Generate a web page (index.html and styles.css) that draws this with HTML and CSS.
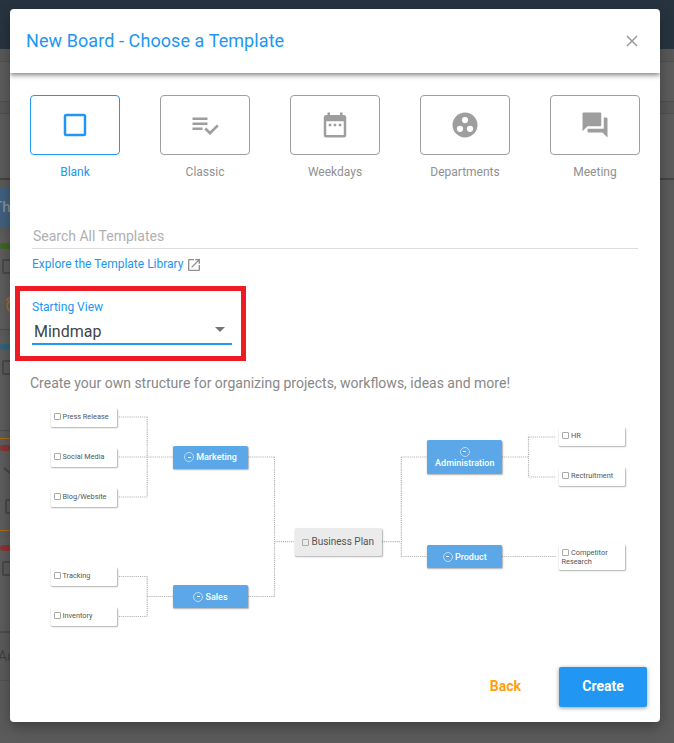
FILE: index.html
```html
<!DOCTYPE html>
<html lang="en">
<head>
<meta charset="utf-8">
<title>New Board</title>
<link rel="stylesheet" href="styles.css">
</head>
<body>
<div class="page">
  <div class="topbar"></div>
  <div class="strip strip-a"></div>
  <div class="strip strip-b"></div>
  <div class="strip strip-c"></div>
  <div class="strip strip-d"></div>
  <div class="board">
    <div class="column-head">Th</div>
    <div class="card card-one">
      <div class="label green"></div>
      <div class="check"></div>
      <svg class="clock" width="20" height="20" viewBox="0 0 24 24"><path d="M22 5.7l-4.6-3.9-1.3 1.5 4.6 3.9L22 5.7zM7.9 3.4L6.6 1.9 2 5.7l1.3 1.5 4.6-3.8zM12.500 8H11v6l4.700 2.900.8-1.200-4-2.400V8zM12 4a9 9 0 1 0 0 18 9 9 0 0 0 0-18zm0 16a7 7 0 1 1 0-14 7 7 0 0 1 0 14z"/></svg>
    </div>
    <div class="card card-two">
      <div class="label blue"></div>
      <div class="check"></div>
    </div>
    <div class="card card-three">
      <div class="label red"></div>
      <svg class="chevron" width="14" height="8" viewBox="0 0 14 8"><path d="M1 1l6 5 6-5"/></svg>
      <div class="check small"></div>
    </div>
    <div class="card card-four">
      <div class="label red"></div>
      <div class="check"></div>
    </div>
    <div class="add">Ad</div>
  </div>
</div>

<div class="modal">
  <header class="modal-head">
    <h1>New Board - Choose a Template</h1>
    <svg class="close" width="12" height="12" viewBox="0 0 12 12"><path d="M1 1l10 10M11 1L1 11"/></svg>
  </header>
  <div class="modal-body">
    <div class="templates">
      <div class="template selected">
        <div class="tile"><svg width="30" height="30" viewBox="0 0 24 24"><path d="M19 3H5a2 2 0 0 0-2 2v14a2 2 0 0 0 2 2h14a2 2 0 0 0 2-2V5a2 2 0 0 0-2-2zm0 16H5V5h14v14z"/></svg></div>
        <span>Blank</span>
      </div>
      <div class="template">
        <div class="tile"><svg width="30" height="30" viewBox="0 0 24 24"><path d="M14 10H2v2h12v-2zm0-4H2v2h12V6zM2 16h8v-2H2v2zm19.500-4.500L23 13l-6.990 7-4.510-4.500L13 14l3.010 3 5.490-5.500z"/></svg></div>
        <span>Classic</span>
      </div>
      <div class="template">
        <div class="tile"><svg width="30" height="30" viewBox="0 0 24 24"><path d="M9 11H7v2h2v-2zm4 0h-2v2h2v-2zm4 0h-2v2h2v-2zm2-7h-1V2h-2v2H8V2H6v2H5a2 2 0 0 0-2 2v14a2 2 0 0 0 2 2h14a2 2 0 0 0 2-2V6a2 2 0 0 0-2-2zm0 16H5V9h14v11z"/></svg></div>
        <span>Weekdays</span>
      </div>
      <div class="template">
        <div class="tile"><svg width="30" height="30" viewBox="0 0 24 24"><path fill-rule="evenodd" d="M12 2a10 10 0 1 0 0 20 10 10 0 0 0 0-20zM8 17.500a2.500 2.500 0 1 1 0-5 2.500 2.500 0 0 1 0 5zM9.500 8a2.500 2.500 0 1 1 5 0 2.500 2.500 0 0 1-5 0zm6.500 9.500a2.500 2.500 0 1 1 0-5 2.500 2.500 0 0 1 0 5z"/></svg></div>
        <span>Departments</span>
      </div>
      <div class="template">
        <div class="tile"><svg width="30" height="30" viewBox="0 0 24 24"><path d="M21 6h-2v9H6v2c0 .55.45 1 1 1h11l4 4V7c0-.55-.45-1-1-1zm-4 6V3c0-.55-.45-1-1-1H3c-.55 0-1 .45-1 1v14l4-4h10c.55 0 1-.45 1-1z"/></svg></div>
        <span>Meeting</span>
      </div>
    </div>

    <div class="search">Search All Templates</div>
    <div class="library">
      <a>Explore the Template Library</a>
      <svg width="16" height="16" viewBox="0 0 24 24"><path d="M19 19H5V5h7V3H5a2 2 0 0 0-2 2v14a2 2 0 0 0 2 2h14c1.100 0 2-.9 2-2v-7h-2v7zM14 3v2h3.590l-9.830 9.830 1.410 1.410L19 6.410V10h2V3h-7z"/></svg>
    </div>

    <div class="view-box">
      <label>Starting View</label>
      <div class="select"><span>Mindmap</span><i class="arrow"></i></div>
    </div>

    <p class="intro">Create your own structure for organizing projects, workflows, ideas and more!</p>

    <div class="map">
      <svg class="links" width="610" height="240" viewBox="30 400 610 240">
        <path d="M119 417H147.200M119 457H173M119 497H147.200M147.200 417V497M248 457H274.500M119 576.500H147.200M119 616.500H147.200M147.200 576.500V616.500M147.200 596.500H173M248 596.500H274.500M274.500 457V596.500M274.500 541.700H294M382 541.700H401.300M401.300 457V556.500M401.300 457H427M401.300 556.500H427M502 457H528.500M528.500 437V477M528.500 437H556M528.500 477H556M502 556.500H556"/>
      </svg>
      <div class="node leaf press"><i></i>Press Release</div>
      <div class="node leaf social"><i></i>Social Media</div>
      <div class="node leaf blog"><i></i>Blog/Website</div>
      <div class="node leaf tracking"><i></i>Tracking</div>
      <div class="node leaf inventory"><i></i>Inventory</div>
      <div class="node leaf hr"><i></i>HR</div>
      <div class="node leaf recruit"><i></i>Rectruitment</div>
      <div class="node leaf competitor"><i></i>Competitor<br>Research</div>
      <div class="node branch marketing"><b></b>Marketing</div>
      <div class="node branch sales"><b></b>Sales</div>
      <div class="node branch administration"><b></b>Administration</div>
      <div class="node branch product"><b></b>Product</div>
      <div class="node root"><i></i>Business Plan</div>
    </div>

    <footer class="actions">
      <button class="back">Back</button>
      <button class="create">Create</button>
    </footer>
  </div>
</div>
</body>
</html>
```
FILE: styles.css
```css
* { box-sizing: border-box; }
body { margin: 0; width: 674px; height: 743px; overflow: hidden; position: relative; font-family: Roboto, sans-serif; background: #5b5b5b; }

.page { height: 743px; overflow: hidden; display: flex; flex-direction: column; }
.topbar { height: 49px; background: #27343f; flex: none; }
.strip { flex: none; border-bottom: 1px solid #505050; background: #5c5c5c; }
.strip-a { height: 13px; background: #585858; }
.strip-b { height: 40px; }
.strip-c { height: 12px; background: #585858; }
.strip-d { height: 66px; border-bottom: 2px solid #444; }
.board { flex: 1; padding-top: 8px; width: 200px; }
.column-head { height: 40px; background: #42617f; color: #858f99; font-size: 15px; font-weight: 500; line-height: 38px; text-indent: -7px; }
.card { background: #5d5d5d; border-bottom: 1px solid #4d4d4d; padding-left: 2px; }
.label { height: 6px; margin-left: -2px; border-radius: 3px; }
.green { background: #3c6623; }
.blue { background: #2c6480; }
.red { background: #8c3333; }
.check { width: 15px; height: 15px; border: 2px solid #484848; border-radius: 2px; margin-top: 10px; }
.card-one { margin-top: 7px; height: 95px; padding-top: 8px; }
.clock { display: block; margin: 21px 0 0 2px; fill: #a86f23; }
.card-two { margin-top: 6px; height: 95px; padding-top: 8px; }
.card-three { margin-top: 7px; height: 93px; padding-top: 6px; border: solid #ab6c17; border-width: 1px 0; }
.chevron { display: block; margin: 16px 0 0 1px; fill: none; stroke: #444; stroke-width: 2; }
.check.small { margin: 24px 0 0 3px; }
.card-four { margin-top: 7px; height: 95px; padding-top: 7px; border-bottom-width: 2px; }
.add { height: 48px; line-height: 46px; border-bottom: 1px solid #525252; color: #414141; font-size: 14px; text-indent: -2px; }

.modal { position: absolute; left: 10px; top: 9px; width: 650px; height: 713px; background: #fff; border-radius: 4px; box-shadow: 0 5px 14px rgba(0,0,0,.32); }
.modal-head { height: 64px; padding: 0 22px 0 16px; display: flex; align-items: center; justify-content: space-between; box-shadow: 0 2px 5px rgba(0,0,0,.5); clip-path: inset(0 0 -12px 0); }
.modal-head h1 { margin: -1px 0 0; font-size: 18px; letter-spacing: .08px; font-weight: 400; color: #2196f3; }
.close { fill: none; stroke: #999; stroke-width: 1.5; }
.modal-body { padding: 22px 20px 0; }

.templates { display: flex; justify-content: space-between; }
.template { width: 90px; text-align: center; color: #909090; font-size: 12px; line-height: 16px; }
.tile { height: 60px; border: 1px solid #9e9e9e; border-radius: 4px; display: flex; align-items: center; justify-content: center; margin-bottom: 9px; }
.tile svg { fill: #9e9e9e; }
.selected { color: #2196f3; }
.selected .tile { border-color: #2196f3; }
.selected svg { fill: #2196f3; }

.search { margin: 43px 2px 0; height: 26px; padding-left: 1px; line-height: 27px; font-size: 14px; color: #b0b0b0; border-bottom: 1px solid #ddd; }
.library { display: flex; align-items: center; gap: 3px; margin: 6px 0 0 2px; height: 18px; font-size: 12px; color: #2196f3; }
.library svg { fill: #8f8f8f; margin-top: 1px; }

.view-box { width: 231px; height: 75px; margin: 13px 0 0 -15px; border: 5px solid #ed1c24; padding: 8px 9px 0 12px; }
.view-box label { display: block; font-size: 12px; line-height: 16px; color: #2196f3; }
.select { height: 30px; border-bottom: 2px solid #2196f3; display: flex; align-items: center; justify-content: space-between; padding: 5px 7px 0 2px; font-size: 16px; color: #444; }
.arrow { border: solid transparent; border-width: 5px 5px 0; border-top-color: #757575; margin-top: -4px; }
.intro { margin: 12px 0 0; font-size: 14px; line-height: 20px; color: #888; white-space: nowrap; }

.map { position: relative; height: 240px; margin-top: 7px; }
.links { display: block; fill: none; stroke: #b0b0b0; stroke-width: 1.2; stroke-dasharray: 1.1 1; }
.node { position: absolute; border-radius: 1.5px; box-shadow: .5px 1px 1.5px rgba(0,0,0,.3); white-space: nowrap; }
.leaf { width: 66px; height: 19px; padding: 4px 0 0 3px; background: #fff; color: #555; font-size: 7.350px; line-height: 9px; }
.node i { display: inline-block; width: 7px; height: 7px; border: 1px solid #aaa; margin-right: 2px; vertical-align: -1px; border-radius: 1px; }
.press { left: 20.500px; top: 7.500px; }
.social { left: 20.500px; top: 47.500px; }
.blog { left: 20.500px; top: 87.500px; }
.tracking { left: 20.500px; top: 167px; }
.inventory { left: 20.500px; top: 207px; }
.hr { left: 528.500px; top: 27px; }
.recruit { left: 528.500px; top: 67px; }
.competitor { left: 528.500px; top: 143.500px; height: 26px; }
.hr i, .recruit i, .competitor i { margin-right: 2.500px; }
.branch { width: 75px; height: 23px; background: #5ca7e8; color: #fff; font-size: 9px; font-weight: 500; line-height: 10px; display: flex; align-items: center; justify-content: center; gap: 2px; }
.branch b { width: 10px; height: 10px; border: 1px solid #c0dcf6; border-radius: 50%; display: flex; align-items: center; justify-content: center; }
.branch b::after { content: ""; width: 3px; height: 1px; background: #fff; }
.marketing { left: 143px; top: 45.500px; }
.sales { left: 143px; top: 185px; }
.administration { left: 397.300px; top: 40px; height: 34px; flex-direction: column; gap: 1px; }
.product { left: 397.300px; top: 145px; }
.root { left: 264.500px; top: 128px; width: 87.500px; height: 27.500px; background: #ebebeb; color: #555; font-size: 10px; line-height: 28px; text-align: center; }

.actions { display: flex; justify-content: flex-end; align-items: center; gap: 38px; margin: 27px -7px 0 0; }
.actions button { border: 0; padding: 0 0 2px; font: 700 14px Roboto, sans-serif; background: none; height: 40px; }
.back { color: #ff9f0f; }
.actions .create { width: 88px; background: #2196f3; color: #fff; border-radius: 2px; box-shadow: 0 1px 4px rgba(0,0,0,.4); }
```
